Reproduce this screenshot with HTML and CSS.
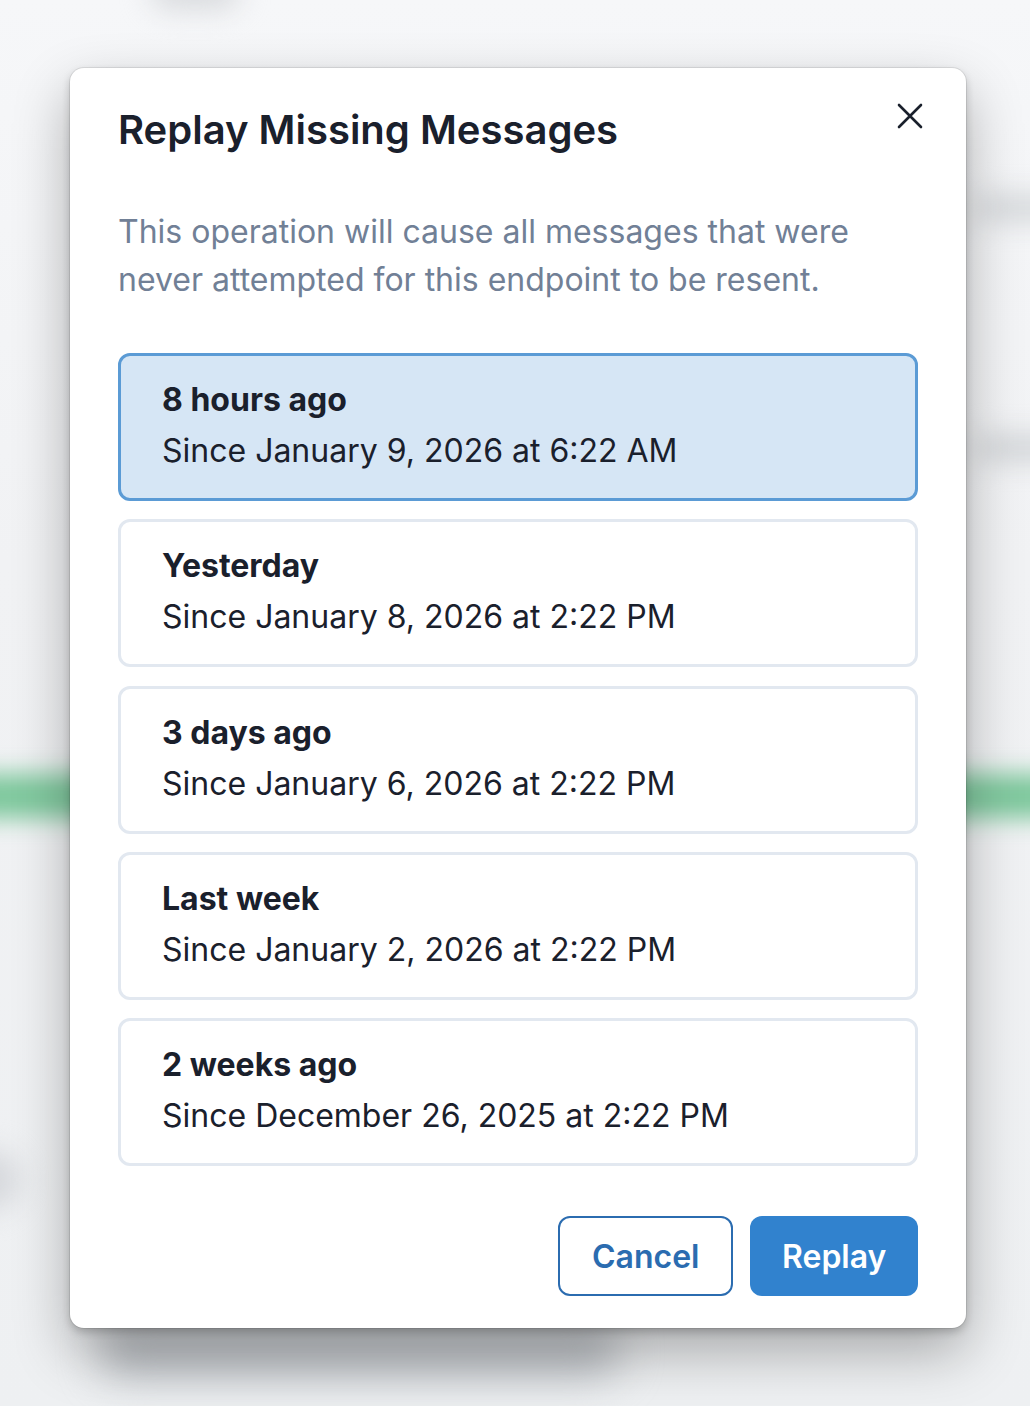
FILE: index.html
```html
<!DOCTYPE html>
<html lang="en">
<head>
<meta charset="utf-8">
<title>Replay Missing Messages</title>
<link rel="stylesheet" href="styles.css">
</head>
<body>
<div class="backdrop" aria-hidden="true">
  <div class="blob blob-top"></div>
  <div class="blob blob-green-left"></div>
  <div class="blob blob-green-right"></div>
  <div class="blob blob-right-a"></div>
  <div class="blob blob-right-b"></div>
  <div class="blob blob-left-a"></div>
  <div class="blob blob-bottom"></div>
</div>
<div class="stage">
  <section class="modal" role="dialog" aria-labelledby="modal-title">
    <header class="modal-header">
      <h2 id="modal-title" class="modal-title">Replay Missing Messages</h2>
      <button class="close-btn" aria-label="Close">
        <svg width="26" height="26" viewBox="0 0 26 26" fill="none" stroke="#1a202c" stroke-width="2.6" stroke-linecap="round">
          <path d="M2 2 L24 24 M24 2 L2 24"/>
        </svg>
      </button>
    </header>
    <div class="modal-body">
      <p class="description">This operation will cause all messages that were never attempted for this endpoint to be resent.</p>
      <div class="options">
        <div class="option selected">
          <div class="option-title">8 hours ago</div>
          <div class="option-sub">Since January 9, 2026 at 6:22 AM</div>
        </div>
        <div class="option">
          <div class="option-title">Yesterday</div>
          <div class="option-sub">Since January 8, 2026 at 2:22 PM</div>
        </div>
        <div class="option">
          <div class="option-title">3 days ago</div>
          <div class="option-sub">Since January 6, 2026 at 2:22 PM</div>
        </div>
        <div class="option">
          <div class="option-title">Last week</div>
          <div class="option-sub">Since January 2, 2026 at 2:22 PM</div>
        </div>
        <div class="option">
          <div class="option-title">2 weeks ago</div>
          <div class="option-sub">Since December 26, 2025 at 2:22 PM</div>
        </div>
      </div>
    </div>
    <footer class="modal-footer">
      <button class="btn btn-outline">Cancel</button>
      <button class="btn btn-solid">Replay</button>
    </footer>
  </section>
</div>
</body>
</html>
```
FILE: styles.css
```css
* { box-sizing: border-box; }

html, body {
  margin: 0;
  padding: 0;
}

body {
  width: 1030px;
  height: 1406px;
  overflow: hidden;
  background: #f2f3f5;
  font-family: Inter, "Noto Sans", "Liberation Sans", sans-serif;
  color: #1a202c;
  position: relative;
}

.backdrop {
  position: absolute;
  inset: 0;
  overflow: hidden;
  background: linear-gradient(180deg, #f6f7f9 0%, #f1f2f4 40%, #eef0f2 100%);
}

.blob {
  position: absolute;
  border-radius: 40px;
  filter: blur(14px);
}

.blob-top {
  left: 150px; top: -30px; width: 90px; height: 40px;
  background: #d9dbde;
}

.blob-green-left {
  left: -40px; top: 774px; width: 150px; height: 44px;
  background: #7cc79b;
  filter: blur(12px);
}

.blob-green-right {
  left: 930px; top: 774px; width: 150px; height: 44px;
  background: #7cc79b;
  filter: blur(12px);
}

.blob-right-a {
  left: 975px; top: 195px; width: 100px; height: 26px;
  background: #d3d6d9;
}

.blob-right-b {
  left: 975px; top: 435px; width: 110px; height: 26px;
  background: #d0d3d6;
}

.blob-left-a {
  left: -40px; top: 1150px; width: 60px; height: 60px;
  background: #d6d8dc;
}

.blob-bottom {
  left: 100px; top: 1326px; width: 520px; height: 50px;
  background: #b9bdc2;
  filter: blur(20px);
}

.stage {
  position: relative;
  padding-top: 68px;
  padding-left: 70px;
}

.modal {
  width: 896px;
  height: 1260px;
  background: #ffffff;
  border-radius: 14px;
  box-shadow:
    0 0 0 1px rgba(0, 0, 0, 0.08),
    0 4px 8px rgba(0, 0, 0, 0.2),
    0 24px 56px rgba(0, 0, 0, 0.3);
  display: flex;
  flex-direction: column;
}

.modal-header {
  display: flex;
  justify-content: space-between;
  align-items: flex-start;
  padding: 32px 24px 0 48px;
  flex-shrink: 0;
}

.modal-title {
  margin: 0;
  font-size: 40px;
  line-height: 60px;
  font-weight: 600;
  color: #1a202c;
}

.close-btn {
  width: 64px;
  height: 64px;
  margin-top: -16px;
  margin-bottom: 12px;
  border: 0;
  background: transparent;
  display: flex;
  align-items: center;
  justify-content: center;
  padding: 0;
  border-radius: 12px;
}

.modal-body {
  padding: 48px 48px 0 48px;
  flex-shrink: 0;
}

.description {
  margin: 0;
  font-size: 32px;
  line-height: 48px;
  color: #718096;
  max-width: 780px;
}

.options {
  margin-top: 49px;
  display: flex;
  flex-direction: column;
  gap: 18.3px;
}

.option {
  height: 148px;
  border: 3px solid #e2e8f0;
  border-radius: 12px;
  padding: 18px 40px 0 41px;
  background: #ffffff;
}

.option.selected {
  background: #d6e6f5;
  border-color: #5b9bd5;
}

.option-title {
  font-size: 32px;
  line-height: 51px;
  font-weight: 700;
  color: #1a202c;
}

.option-sub {
  font-size: 32px;
  line-height: 51px;
  font-weight: 400;
  color: #1a202c;
}

.modal-footer {
  margin-top: auto;
  display: flex;
  justify-content: flex-end;
  gap: 17px;
  padding: 0 48px 32px 48px;
}

.btn {
  height: 80px;
  border-radius: 12px;
  font-family: inherit;
  font-size: 32px;
  font-weight: 600;
  padding: 0 32px;
  cursor: pointer;
}

.btn-outline {
  width: 175px;
  background: #ffffff;
  color: #2b6cb0;
  border: 2.5px solid #2b6cb0;
}

.btn-solid {
  width: 168px;
  background: #3182ce;
  color: #ffffff;
  border: 0;
}
```
